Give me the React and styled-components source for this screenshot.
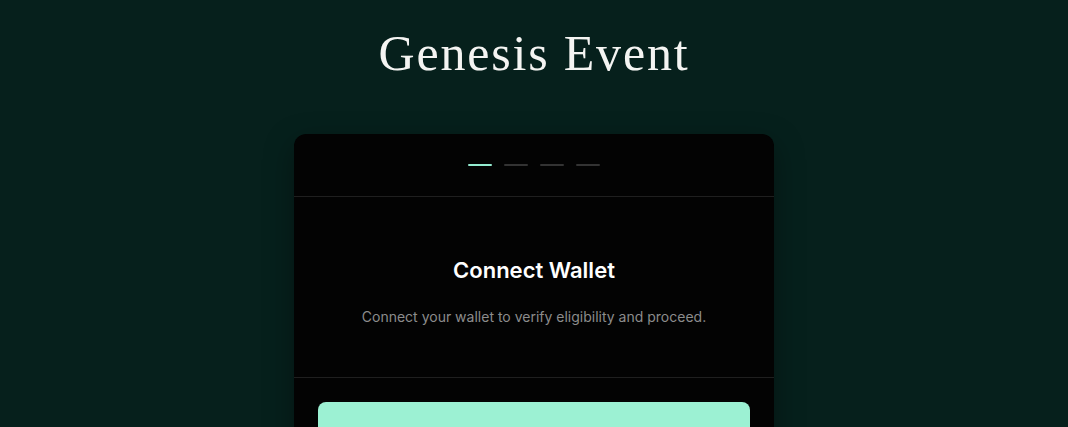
import React from "react";
import styled, { createGlobalStyle } from "styled-components";

const GlobalStyle = createGlobalStyle`
  body {
    margin: 0;
    background: #06201c;
    font-family: Inter, "Noto Sans", sans-serif;
  }
`;

const Page = styled.div`
  min-height: 100vh;
  display: flex;
  flex-direction: column;
  align-items: center;
  padding-top: 24px;
`;

const Title = styled.h1`
  margin: 0 0 52px;
  font-family: "Liberation Serif", "DejaVu Serif", serif;
  font-weight: 400;
  font-size: 50px;
  line-height: 58px;
  letter-spacing: 1.8px;
  color: #f4f4f2;
`;

const Card = styled.div`
  width: 480px;
  background: #030303;
  border-radius: 12px;
  box-shadow: 0 10px 30px rgba(0, 0, 0, 0.35);
  overflow: hidden;
`;

const Steps = styled.div`
  height: 62px;
  display: flex;
  justify-content: center;
  align-items: center;
  gap: 12px;
  border-bottom: 1px solid #1f1f1f;
`;

const Step = styled.span`
  width: 24px;
  height: 2px;
  border-radius: 1px;
  background: ${(p) => (p.$active ? "#94ecd0" : "#333333")};
`;

const Body = styled.div`
  padding: 58px 24px 50px;
  display: flex;
  flex-direction: column;
  align-items: center;
  gap: 22px;
  border-bottom: 1px solid #1f1f1f;
`;

const Heading = styled.h2`
  margin: 0;
  font-size: 22px;
  line-height: 30px;
  font-weight: 600;
  color: #ffffff;
`;

const Text = styled.p`
  margin: 0;
  font-size: 14px;
  line-height: 20px;
  color: #8c8c8c;
`;

const Footer = styled.div`
  padding: 24px;
`;

const Button = styled.button`
  width: 100%;
  height: 64px;
  border: none;
  border-radius: 8px;
  background: #9cf1d3;
  color: #04201a;
  font-family: Inter, sans-serif;
  font-size: 15px;
  font-weight: 600;
  cursor: pointer;
`;

export default function App() {
  return (
    <>
      <GlobalStyle />
      <Page>
        <Title>Genesis Event</Title>
        <Card>
          <Steps>
            <Step $active />
            <Step />
            <Step />
            <Step />
          </Steps>
          <Body>
            <Heading>Connect Wallet</Heading>
            <Text>Connect your wallet to verify eligibility and proceed.</Text>
          </Body>
          <Footer>
            <Button>Connect Wallet</Button>
          </Footer>
        </Card>
      </Page>
    </>
  );
}
